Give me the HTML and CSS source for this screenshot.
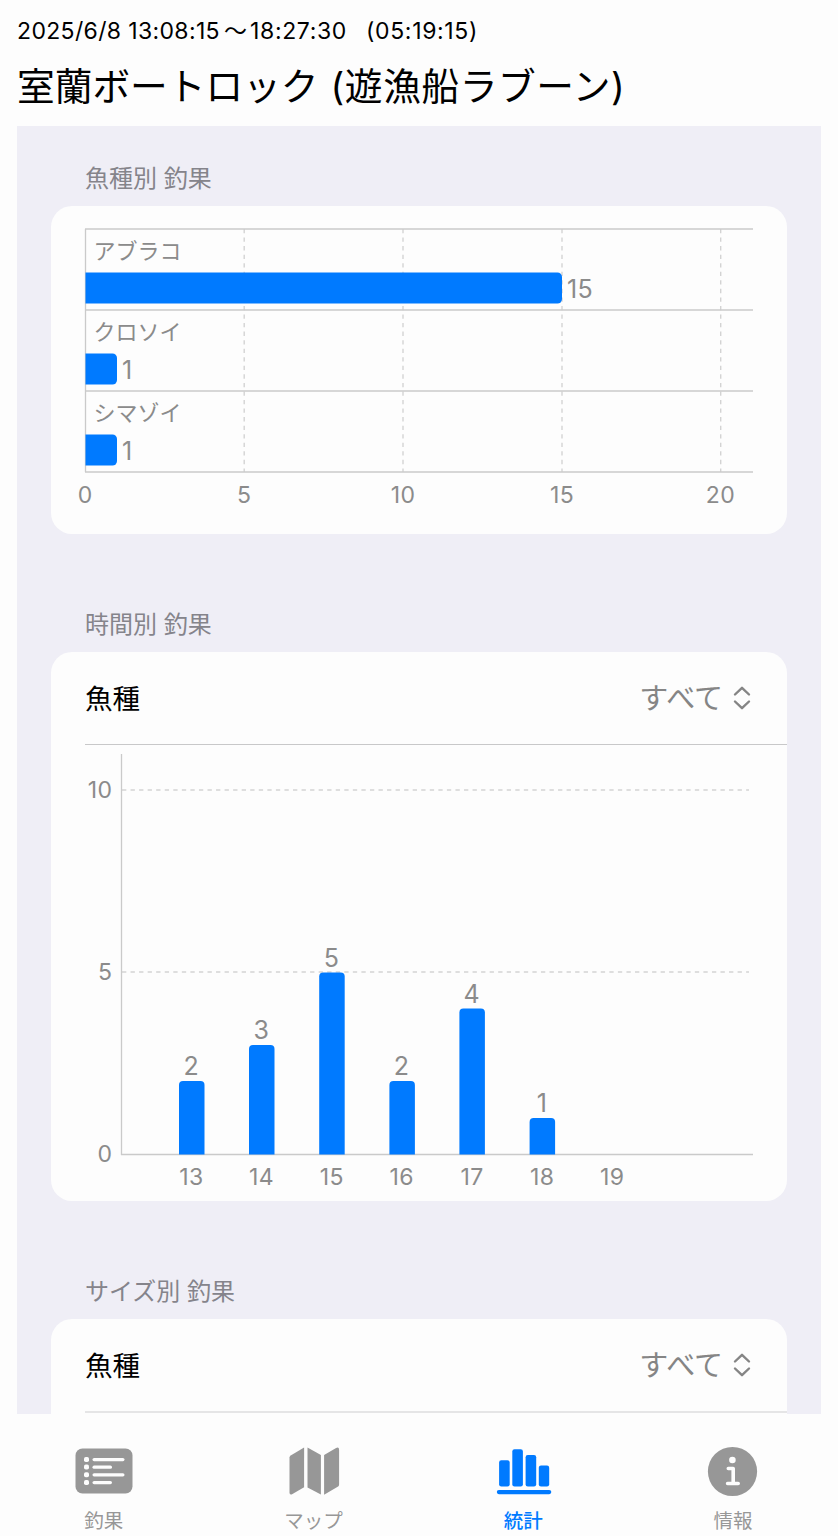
FILE: index.html
```html
<!DOCTYPE html>
<html lang="ja">
<head>
    <meta charset="UTF-8">
    <meta name="viewport" content="width=device-width, initial-scale=1.0">
    <title>室蘭ボートロック</title>
    <link rel="stylesheet" href="styles.css">
</head>
<body>
    <header class="header">
        <div class="period"><span class="start">2025/6/8 13:08:15</span><span class="tilde">～</span><span>18:27:30</span><span class="duration">(05:19:15)</span></div>
        <h1 class="title">室蘭ボートロック<span class="boat">(遊漁船ラブーン)</span></h1>
    </header>

    <main class="content">
        <section class="section">
            <h2 class="section-title">魚種別 釣果</h2>
            <div class="card">
                <svg class="chart" width="735" height="328" viewBox="0 0 735 328">
                    <path class="grid" d="M193.2 23V266M352 23V266M511 23V266M669.7 23V266"/>
                    <path class="line" d="M34 23H702M34 104H702M34 185H702M34 266H702"/>
                    <path class="line" d="M34.5 23V266"/>
                    <path class="bar" d="M34.5 66.5h472a4.5 4.5 0 0 1 4.5 4.5v22a4.5 4.5 0 0 1-4.5 4.5h-472z"/>
                    <path class="bar" d="M34.5 147.5h27a4.5 4.5 0 0 1 4.5 4.5v22a4.5 4.5 0 0 1-4.5 4.5h-27z"/>
                    <path class="bar" d="M34.5 228.5h27a4.5 4.5 0 0 1 4.5 4.5v22a4.5 4.5 0 0 1-4.5 4.5h-27z"/>
                    <g class="name">
                        <text x="42.5" y="53">アブラコ</text>
                        <text x="42.5" y="134">クロソイ</text>
                        <text x="42.5" y="215">シマゾイ</text>
                    </g>
                    <g class="value">
                        <text x="516" y="91.5">15</text>
                        <text x="71" y="172.5">1</text>
                        <text x="71" y="253.5">1</text>
                    </g>
                    <g class="tick middle">
                        <text x="34.3" y="296.5">0</text>
                        <text x="193.3" y="296.5">5</text>
                        <text x="352" y="296.5">10</text>
                        <text x="511" y="296.5">15</text>
                        <text x="669.5" y="296.5">20</text>
                    </g>
                </svg>
            </div>
        </section>

        <section class="section">
            <h2 class="section-title">時間別 釣果</h2>
            <div class="card">
                <div class="row">
                    <span class="row-label">魚種</span>
                    <span class="picker"><span class="picker-value">すべて</span>
                        <svg class="chevrons" width="18" height="26" viewBox="0 0 18 26">
                            <path d="M2 9.5L9 2.8L16 9.5M2 16.5L9 23.2L16 16.5"/>
                        </svg>
                    </span>
                </div>
                <svg class="chart" width="735" height="456" viewBox="0 0 735 456">
                    <path class="grid" d="M71 45H698M71 227H698"/>
                    <path class="line" d="M70.5 9V410M70 409.5H702"/>
                    <path class="bar" d="M128 409.5v-69.5a4 4 0 0 1 4-4h17.5a4 4 0 0 1 4 4v69.5z"/>
                    <path class="bar" d="M198 409.5v-105.5a4 4 0 0 1 4-4h17.5a4 4 0 0 1 4 4v105.5z"/>
                    <path class="bar" d="M268.2 409.5v-178a4 4 0 0 1 4-4h17.5a4 4 0 0 1 4 4v178z"/>
                    <path class="bar" d="M338.4 409.5v-69.5a4 4 0 0 1 4-4h17.5a4 4 0 0 1 4 4v69.5z"/>
                    <path class="bar" d="M408.4 409.5v-142a4 4 0 0 1 4-4h17.5a4 4 0 0 1 4 4v142z"/>
                    <path class="bar" d="M478.6 409.5v-32.5a4 4 0 0 1 4-4h17.5a4 4 0 0 1 4 4v32.5z"/>
                    <g class="value middle">
                        <text x="140.3" y="329.5">2</text>
                        <text x="210.3" y="293.5">3</text>
                        <text x="280.5" y="221.5">5</text>
                        <text x="350.7" y="329.5">2</text>
                        <text x="420.8" y="257.5">4</text>
                        <text x="491" y="366.5">1</text>
                    </g>
                    <g class="tick end">
                        <text x="61.5" y="53">10</text>
                        <text x="61.5" y="235">5</text>
                        <text x="61.5" y="417">0</text>
                    </g>
                    <g class="tick middle">
                        <text x="140.5" y="440">13</text>
                        <text x="210.5" y="440">14</text>
                        <text x="280.7" y="440">15</text>
                        <text x="350.8" y="440">16</text>
                        <text x="421" y="440">17</text>
                        <text x="491.2" y="440">18</text>
                        <text x="561.3" y="440">19</text>
                    </g>
                </svg>
            </div>
        </section>

        <section class="section">
            <h2 class="section-title">サイズ別 釣果</h2>
            <div class="card">
                <div class="row row-light">
                    <span class="row-label">魚種</span>
                    <span class="picker"><span class="picker-value">すべて</span>
                        <svg class="chevrons" width="18" height="26" viewBox="0 0 18 26">
                            <path d="M2 9.5L9 2.8L16 9.5M2 16.5L9 23.2L16 16.5"/>
                        </svg>
                    </span>
                </div>
                <div class="spacer"></div>
            </div>
        </section>
    </main>

    <nav class="tabs">
        <a class="tab">
            <svg width="60" height="52" viewBox="0 0 60 52">
                <rect x="1.5" y="3.5" width="57" height="45" rx="7" fill="currentColor"/>
                <g fill="#fdfdfd">
                    <rect x="10" y="12" width="5" height="5" rx="1.8"/>
                    <rect x="10" y="19.6" width="5" height="5" rx="1.8"/>
                    <rect x="10" y="27.2" width="5" height="5" rx="1.8"/>
                    <rect x="10" y="35" width="5" height="5" rx="1.8"/>
                    <rect x="18.5" y="13" width="32" height="3.2" rx="1.6"/>
                    <rect x="18.5" y="20.6" width="19.5" height="3.2" rx="1.6"/>
                    <rect x="18.5" y="28.2" width="32" height="3.2" rx="1.6"/>
                    <rect x="18.5" y="36" width="19.5" height="3.2" rx="1.6"/>
                </g>
            </svg>
            <span>釣果</span>
        </a>
        <a class="tab">
            <svg width="60" height="52" viewBox="0 0 60 52">
                <g fill="currentColor">
                    <path d="M5.5 12.5Q5.5 11.2 6.7 10.4L20.1 2.6V42.2L8.5 49Q5.5 50.5 5.5 47.5Z"/>
                    <path d="M23.5 2.6L36.9 10V49.6L23.5 42.6Z"/>
                    <path d="M40.1 10L52.1 3Q55.1 1.6 55.1 5V39.4Q55.1 41 53.7 41.8L40.1 49.8Z"/>
                </g>
            </svg>
            <span>マップ</span>
        </a>
        <a class="tab active">
            <svg width="60" height="52" viewBox="0 0 60 52">
                <g fill="currentColor">
                    <rect x="6.1" y="15.3" width="10.6" height="26.2" rx="2.2"/>
                    <rect x="19.3" y="4.2" width="10.6" height="37.3" rx="2.2"/>
                    <rect x="32.6" y="10" width="10.6" height="31.5" rx="2.2"/>
                    <rect x="45.8" y="20.5" width="10.4" height="21" rx="2.2"/>
                    <rect x="3.8" y="44.9" width="54.5" height="4.3" rx="2.1"/>
                </g>
            </svg>
            <span>統計</span>
        </a>
        <a class="tab">
            <svg width="60" height="52" viewBox="0 0 60 52">
                <circle cx="29.5" cy="26.5" r="24.6" fill="currentColor"/>
                <circle cx="29.4" cy="15" r="3.3" fill="#fdfdfd"/>
                <path d="M25.3 23.5H30.2V38.5M24.6 38.5H35.2" fill="none" stroke="#fdfdfd" stroke-width="3.6" stroke-linecap="round" stroke-linejoin="round"/>
            </svg>
            <span>情報</span>
        </a>
    </nav>
</body>
</html>
```

FILE: styles.css
```css
* {
    box-sizing: border-box;
}

body {
    display: flex;
    flex-direction: column;
    height: 1536px;
    margin: 0;
    overflow: hidden;
    background-color: #fdfdfd;
    color: #000;
    font-family: Inter, "Noto Sans CJK JP", sans-serif;
}

.header {
    height: 126px;
    padding: 15px 17px 0;
    white-space: nowrap;
}

.period {
    display: flex;
    height: 32px;
    font-size: 23px;
    line-height: 32px;
    letter-spacing: 0.65px;
}

.start {
    width: 205px;
    letter-spacing: 0.35px;
}

.tilde {
    width: 28px;
    padding-left: 2px;
}

.duration {
    margin-left: 19px;
}

.title {
    display: flex;
    gap: 12px;
    margin: 11px 0 0;
    font-size: 37.7px;
    font-weight: 400;
    line-height: 56px;
}

.boat {
    letter-spacing: 0.6px;
}

.content {
    flex: 1;
    min-height: 0;
    margin: 0 17px;
    padding: 0 34px;
    overflow: hidden;
    background-color: #efeef6;
}

.section {
    margin-bottom: 71px;
}

.section:first-child {
    padding-top: 33px;
}

.section-title {
    height: 47px;
    margin: 0;
    padding-left: 34px;
    color: #85848b;
    font-size: 24px;
    font-weight: 400;
    line-height: 39px;
}

.card {
    overflow: hidden;
    border-radius: 21px;
    background-color: #fdfdfd;
}

.row {
    display: flex;
    align-items: center;
    justify-content: space-between;
    height: 93px;
    margin-left: 34px;
    padding-right: 36px;
    border-bottom: 1px solid #c8c8c9;
    font-size: 27.5px;
}

.row-label,
.picker-value {
    padding-bottom: 2px;
}

.row-light {
    height: 94px;
    border-bottom: 2px solid #e5e5e6;
}

.picker {
    display: flex;
    align-items: center;
    gap: 10px;
    color: #858585;
}

.picker-value {
    padding-bottom: 4px;
    font-size: 29px;
}

.chevrons {
    fill: none;
    stroke: currentColor;
    stroke-width: 2.4;
    stroke-linecap: round;
    stroke-linejoin: round;
}

.spacer {
    height: 200px;
}

/* charts */
.chart {
    display: block;
}

.grid {
    fill: none;
    stroke: #d3d3d3;
    stroke-width: 1.4;
    stroke-dasharray: 4.3 4.25;
}

.line {
    fill: none;
    stroke: #cacaca;
    stroke-width: 1.3;
}

.bar {
    fill: #007aff;
}

.name,
.value,
.tick {
    fill: #8b8b8b;
}

.name {
    font-size: 22px;
}

.value {
    font-size: 25px;
    letter-spacing: 0.4px;
}

.tick {
    font-size: 23px;
    letter-spacing: 0.4px;
}

.middle {
    text-anchor: middle;
}

.end {
    text-anchor: end;
}

/* tab bar */
.tabs {
    display: grid;
    grid-template-columns: repeat(4, 1fr);
    height: 122px;
    margin-left: -1px;
    padding-top: 31px;
}

.tab {
    display: flex;
    flex-direction: column;
    align-items: center;
    color: #979797;
    font-size: 19.5px;
    line-height: 28px;
}

.tab span {
    margin-top: 10px;
}

.active {
    color: #007aff;
    font-weight: 500;
}
```
